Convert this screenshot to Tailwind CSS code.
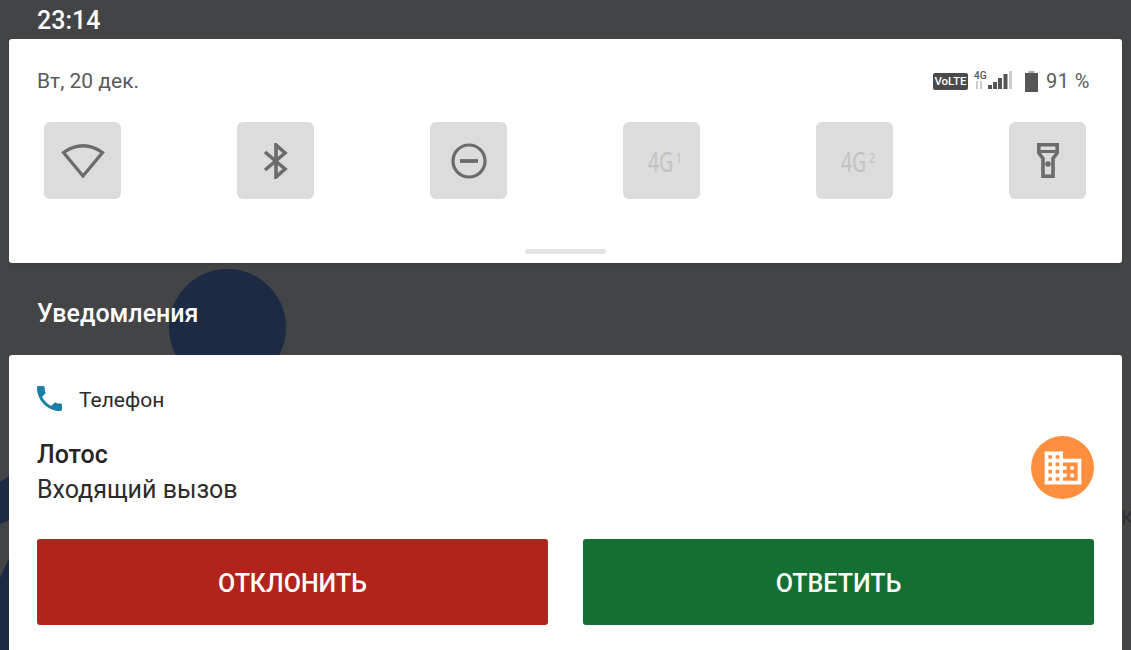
<!DOCTYPE html>
<html lang="ru">
<head>
<meta charset="utf-8">
<script src="https://cdn.jsdelivr.net/npm/@tailwindcss/browser@4"></script>
</head>
<body class="m-0">
<div class="relative w-[1131px] h-[650px] overflow-hidden bg-[#434446] font-['Roboto',sans-serif]">
  <!-- wallpaper shapes behind the shade -->
  <div class="absolute left-[169px] top-[269px] w-[117px] h-[117px] rounded-full bg-[#1c2a44]"></div>
  <svg class="absolute left-0 top-[470px]" width="9" height="180"><path d="M0 12 L9 6 V180 H0Z" fill="#1c2a44"/><path d="M0 54 L9 50 V88 L0 108Z" fill="#434446"/></svg>
  <span class="absolute left-[1121px] top-[506px] text-[20px] leading-[24px] text-[#303133]">К</span>

  <div class="relative flex flex-col h-full">
    <div class="h-[39px] pl-[37px] pt-[6px] text-[25px] leading-[29px] font-medium text-white">23:14</div>

    <section class="ml-[9px] w-[1113px] h-[224px] bg-white rounded-[3px] flex flex-col shadow-sm">
      <div class="flex justify-between pl-[28px] pr-[32px] pt-[29px] h-[83px]">
        <span class="text-[21px] leading-[26px] text-[#5a5a5a]">Вт, 20 дек.</span>
        <div class="flex items-center h-[26px] text-[#555]">
          <span class="w-[35px] h-[17px] bg-[#4a4a4a] rounded-[2px] text-white text-[11.500px] leading-[17px] font-medium text-center">VoLTE</span>
          <svg class="ml-[5px]" width="40" height="22" viewBox="0 0 40 22">
            <text x="1" y="9" font-size="10" font-family="Roboto" font-weight="500" fill="#555">4G</text>
            <rect x="3" y="11" width="2" height="8" fill="#ccc"/><rect x="7" y="11" width="2" height="8" fill="#ccc"/>
            <rect x="15" y="15" width="4" height="4" fill="#555"/><rect x="20" y="12" width="4" height="7" fill="#555"/><rect x="25" y="8" width="4" height="11" fill="#555"/><rect x="30.500" y="4" width="4" height="15" fill="#555"/><rect x="36" y="1" width="3" height="18" fill="#ccc"/>
          </svg>
          <svg class="ml-[12px]" width="13" height="21" viewBox="0 0 13 21"><rect x="3.500" y="0" width="6" height="2" fill="#aaa"/><rect x="0" y="2" width="13" height="19" fill="#555"/></svg>
          <span class="ml-[8px] text-[20px] leading-[24px] tracking-[0.5px] text-[#5a5a5a]">91 %</span>
        </div>
      </div>
      <div class="flex justify-between pl-[35px] pr-[36px]">
        <div class="w-[77px] h-[77px] bg-[#dcdcdc] rounded-[6px] flex items-center justify-center">
          <svg width="44" height="38" viewBox="0 0 44 38" fill="none" stroke="#6b6b6b" stroke-width="3.2"><path d="M2.500 10.500 Q22 -3 41.500 10.500 L22 34Z"/></svg>
        </div>
        <div class="w-[77px] h-[77px] bg-[#dcdcdc] rounded-[6px] flex items-center justify-center">
          <svg width="26" height="36" viewBox="0 0 26 36" fill="none" stroke="#6b6b6b" stroke-width="3.600"><path d="M2 9 L22 26 L13 34 V2 L22 10 L2 27"/></svg>
        </div>
        <div class="w-[77px] h-[77px] bg-[#dcdcdc] rounded-[6px] flex items-center justify-center">
          <svg width="36" height="36" viewBox="0 0 36 36" fill="none" stroke="#6b6b6b"><circle cx="18" cy="18" r="16" stroke-width="3.200"/><path d="M9 18 H27" stroke-width="3.800"/></svg>
        </div>
        <div class="w-[77px] h-[77px] bg-[#dcdcdc] rounded-[6px] flex items-center justify-center text-[#c2c2c2] font-['Noto_Sans',sans-serif] pt-[2px]">
          <span class="text-[27px] leading-none scale-x-[0.72] ml-[3px] -mr-[4px]">4G</span><span class="text-[14px] leading-none -mt-[8px] scale-x-[0.8]">1</span>
        </div>
        <div class="w-[77px] h-[77px] bg-[#dcdcdc] rounded-[6px] flex items-center justify-center text-[#c2c2c2] font-['Noto_Sans',sans-serif] pt-[2px]">
          <span class="text-[27px] leading-none scale-x-[0.72] ml-[3px] -mr-[4px]">4G</span><span class="text-[14px] leading-none -mt-[8px] scale-x-[0.8]">2</span>
        </div>
        <div class="w-[77px] h-[77px] bg-[#dcdcdc] rounded-[6px] flex items-center justify-center">
          <svg width="22" height="35" viewBox="0 0 22 35" fill="none" stroke="#6b6b6b" stroke-width="3.600"><path d="M1.800 1.800 H20.200 V10 L16 15.500 V33.200 H6 V15.500 L1.800 10Z"/><path d="M2 8.500 H20" stroke-width="3"/><circle cx="11" cy="21" r="2.800" fill="#6b6b6b" stroke="none"/></svg>
        </div>
      </div>
      <div class="mt-auto mb-[9px] mx-auto w-[81px] h-[5px] rounded-full bg-[#e3e3e3]"></div>
    </section>

    <h2 class="h-[92px] pl-[37px] pt-[36px] text-[25px] leading-[30px] font-medium text-white">Уведомления</h2>

    <section class="ml-[9px] w-[1113px] flex-1 bg-white rounded-t-[3px] px-[28px] pt-[31px]">
      <div class="flex items-center h-[28px]">
        <svg width="25" height="25" viewBox="3 3 18 18" fill="#1b80a8" class="-mt-[3px]"><path d="M6.600 10.800c1.400 2.800 3.800 5.100 6.600 6.600l2.200-2.200c.3-.3.7-.4 1-.2 1.100.4 2.300.6 3.600.6.600 0 1 .4 1 1V20c0 .6-.4 1-1 1C10.600 21 3 13.400 3 4c0-.6.4-1 1-1h3.500c.6 0 1 .4 1 1 0 1.300.2 2.500.6 3.600.1.300 0 .7-.2 1z"/></svg>
        <span class="ml-[17px] text-[21px] leading-[28px] text-[#2b2b2b]">Телефон</span>
      </div>
      <div class="flex items-center justify-between mt-[21px]">
        <div class="pt-[3px]">
          <div class="text-[25px] leading-[34px] font-medium text-[#262626]">Лотос</div>
          <div class="text-[25px] leading-[36px] text-[#2b2b2b]">Входящий вызов</div>
        </div>
        <div class="w-[63px] h-[63px] mb-[8px] rounded-full bg-[#fd8f3f] flex items-center justify-center">
          <svg width="44" height="44" viewBox="0 0 24 24" fill="#fff"><path d="M12 7V3H2v18h20V7H12zM6 19H4v-2h2v2zm0-4H4v-2h2v2zm0-4H4V9h2v2zm0-4H4V5h2v2zm4 12H8v-2h2v2zm0-4H8v-2h2v2zm0-4H8V9h2v2zm0-4H8V5h2v2zm10 12h-8v-2h2v-2h-2v-2h2v-2h-2V9h8v10zm-2-8h-2v2h2v-2zm0 4h-2v2h2v-2z"/></svg>
        </div>
      </div>
      <div class="flex gap-[35px] mt-[31px]">
        <button class="flex-1 h-[86px] pt-[4px] rounded-[3px] bg-[#b2241b] text-white text-[25px] font-medium">ОТКЛОНИТЬ</button>
        <button class="flex-1 h-[86px] pt-[4px] rounded-[3px] bg-[#136f32] text-white text-[25px] font-medium">ОТВЕТИТЬ</button>
      </div>
    </section>
  </div>
</div>
</body>
</html>
